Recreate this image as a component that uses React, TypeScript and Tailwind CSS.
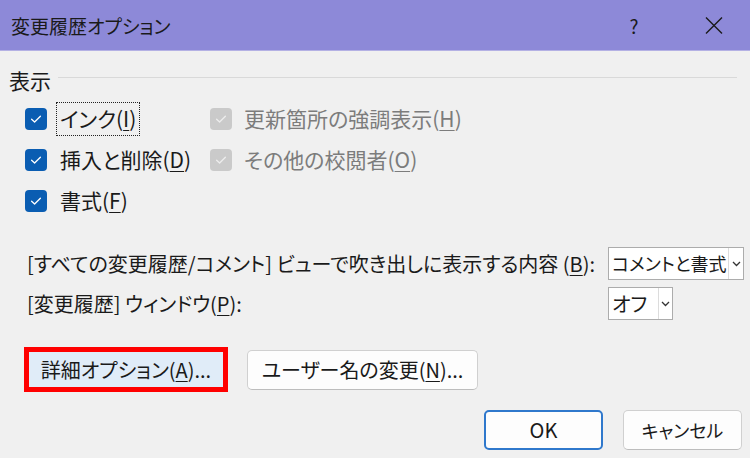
import React from 'react';

function Check({ disabled }: { disabled?: boolean }) {
  return (
    <span
      className={
        disabled
          ? 'w-[22px] h-[22px] shrink-0 rounded-[4px] flex items-center justify-center bg-[#cacaca]'
          : 'w-[22px] h-[22px] shrink-0 rounded-[4px] flex items-center justify-center bg-[#0a5db2]'
      }
    >
      <svg width="12" height="10" viewBox="0 0 12 10">
        <path
          d="M1.6 5.2 L4.6 8 L10.4 2.2"
          fill="none"
          stroke={disabled ? '#ededed' : '#ffffff'}
          strokeWidth="1.3"
          strokeLinecap="round"
          strokeLinejoin="round"
        />
      </svg>
    </span>
  );
}

function Chevron() {
  return (
    <svg width="9" height="6" viewBox="0 0 9 6">
      <path d="M1 1 L4.5 4.5 L8 1" fill="none" stroke="#333" strokeWidth="1.3" />
    </svg>
  );
}

function U({ children }: { children: React.ReactNode }) {
  return <span className="underline underline-offset-[3px] decoration-1">{children}</span>;
}

export default function App() {
  return (
    <div className="w-[750px] h-[458px] bg-[#f0f0f0] flex flex-col overflow-hidden text-[#1a1a1a] font-['Noto_Sans_CJK_JP','Noto_Sans',sans-serif] [font-feature-settings:'palt']">
      {/* Title bar */}
      <div className="h-[51px] shrink-0 bg-[#8d89d8] flex items-center pl-[11px] pr-[27px] border-b border-[#b4b1e4]">
        <span className="text-[19px] leading-none">変更履歴オプション</span>
        <span className="ml-auto w-[20px] text-center text-[19px] leading-none">?</span>
        <svg className="ml-[61px]" width="18" height="17" viewBox="0 0 18 17">
          <path d="M1 0.5 L17 16.5 M17 0.5 L1 16.5" stroke="#1a1a1a" strokeWidth="1.4" fill="none" />
        </svg>
      </div>

      {/* Legend */}
      <div className="mt-[15px] h-[28px] flex pl-[9px] pr-[13px]">
        <span className="text-[21px] leading-[28px]">表示</span>
        <div className="flex-1 h-px bg-[#d9d9d9] ml-[7px] mt-[11px]" />
      </div>

      {/* Checkboxes */}
      <div className="mt-[4px] flex flex-col text-[21px]">
        <div className="h-[41px] flex items-center">
          <div className="w-[210px] pl-[25px] flex items-center">
            <Check />
            <span className="ml-[9px] h-[34px] px-[3px] flex items-center border border-dotted border-[#222] leading-none">
              インク(<U>I</U>)
            </span>
          </div>
          <div className="flex items-center text-[#7c7c7c]">
            <Check disabled />
            <span className="ml-[12px] leading-none">
              更新箇所の強調表示(<U>H</U>)
            </span>
          </div>
        </div>
        <div className="h-[41px] flex items-center">
          <div className="w-[210px] pl-[25px] flex items-center">
            <Check />
            <span className="ml-[9px] px-[3px] border border-transparent leading-none whitespace-nowrap">
              挿入と削除(<U>D</U>)
            </span>
          </div>
          <div className="flex items-center text-[#7c7c7c]">
            <Check disabled />
            <span className="ml-[12px] leading-none">
              その他の校閲者(<U>O</U>)
            </span>
          </div>
        </div>
        <div className="h-[41px] flex items-center">
          <div className="w-[210px] pl-[25px] flex items-center">
            <Check />
            <span className="ml-[9px] px-[3px] border border-transparent leading-none">
              書式(<U>F</U>)
            </span>
          </div>
        </div>
      </div>

      {/* Dropdown rows */}
      <div className="mt-[26px] flex flex-col gap-[7px] text-[20px]">
        <div className="h-[33px] flex items-center">
          <span className="w-[608px] shrink-0 pl-[27px] whitespace-nowrap leading-none">
            [すべての変更履歴/コメント] ビューで吹き出しに表示する内容 (<U>B</U>):
          </span>
          <div className="w-[136px] h-[33px] bg-white border border-[#acacac] flex">
            <span className="w-[119px] overflow-hidden whitespace-nowrap pl-[3px] leading-[31px] text-[18px]">
              コメントと書式
            </span>
            <span className="flex-1 border-l border-[#dcdcdc] flex items-center justify-center">
              <Chevron />
            </span>
          </div>
        </div>
        <div className="h-[33px] flex items-center">
          <span className="w-[608px] shrink-0 pl-[27px] whitespace-nowrap leading-none">
            [変更履歴] ウィンドウ(<U>P</U>):
          </span>
          <div className="w-[65px] h-[33px] bg-white border border-[#acacac] flex">
            <span className="w-[49px] overflow-hidden whitespace-nowrap pl-[3px] leading-[31px]">
              オフ
            </span>
            <span className="flex-1 border-l border-[#dcdcdc] flex items-center justify-center">
              <Chevron />
            </span>
          </div>
        </div>
      </div>

      {/* Buttons */}
      <div className="mt-[27px] flex items-center pl-[24px] gap-[19px] text-[20px]">
        <button className="w-[204px] h-[45px] border-[5px] border-[#ff0000] bg-[#e0ecf8] flex items-center justify-center leading-none">
          詳細オプション(<U>A</U>)...
        </button>
        <button className="w-[231px] h-[40px] rounded-[5px] border border-[#d0d0d0] border-b-[#bdbdbd] bg-[#fdfdfd] flex items-center justify-center leading-none">
          ユーザー名の変更(<U>N</U>)...
        </button>
      </div>

      <div className="mt-[18px] flex justify-end gap-[20px] pr-[8px] text-[20px]">
        <button className="w-[119px] h-[40px] rounded-[5px] border-2 border-[#2f78cc] bg-[#fdfdfd] flex items-center justify-center leading-none">
          OK
        </button>
        <button className="w-[119px] h-[40px] rounded-[5px] border border-[#d0d0d0] border-b-[#bdbdbd] bg-[#fdfdfd] flex items-center justify-center leading-none text-[18px]">
          キャンセル
        </button>
      </div>
    </div>
  );
}
